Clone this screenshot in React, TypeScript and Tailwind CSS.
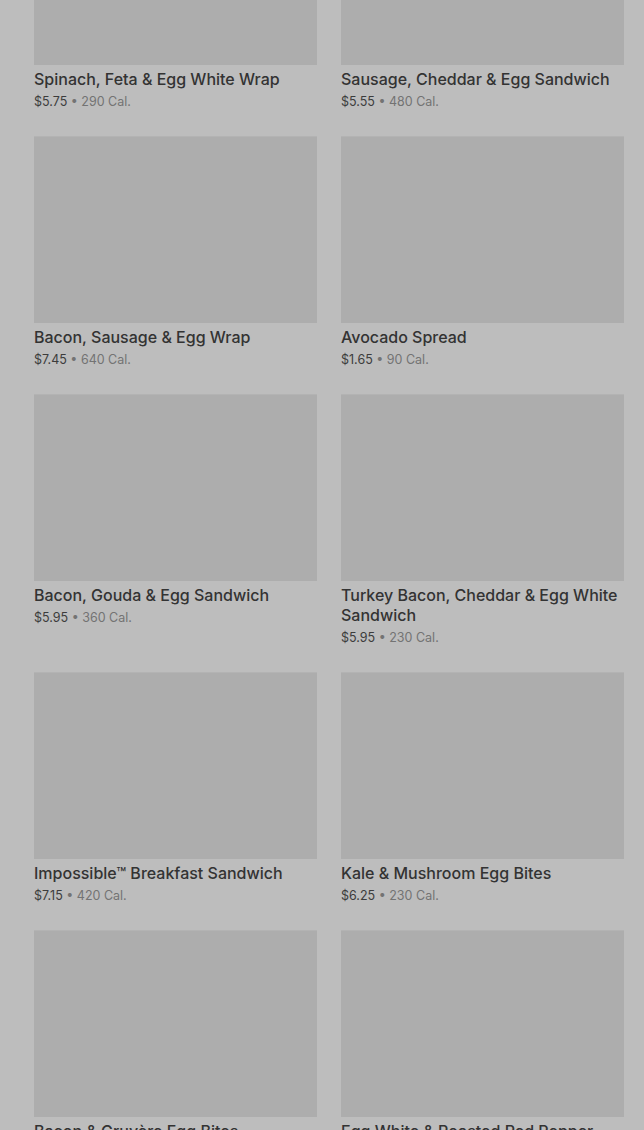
import React from 'react';

interface Item {
  name: string;
  price: string;
  cal: string;
}

const items: Item[] = [
  { name: 'Spinach, Feta & Egg White Wrap', price: '$5.75', cal: '290 Cal.' },
  { name: 'Sausage, Cheddar & Egg Sandwich', price: '$5.55', cal: '480 Cal.' },
  { name: 'Bacon, Sausage & Egg Wrap', price: '$7.45', cal: '640 Cal.' },
  { name: 'Avocado Spread', price: '$1.65', cal: '90 Cal.' },
  { name: 'Bacon, Gouda & Egg Sandwich', price: '$5.95', cal: '360 Cal.' },
  { name: 'Turkey Bacon, Cheddar & Egg White Sandwich', price: '$5.95', cal: '230 Cal.' },
  { name: 'Impossible™ Breakfast Sandwich', price: '$7.15', cal: '420 Cal.' },
  { name: 'Kale & Mushroom Egg Bites', price: '$6.25', cal: '230 Cal.' },
  { name: 'Bacon & Gruyère Egg Bites', price: '$5.45', cal: '300 Cal.' },
  { name: 'Egg White & Roasted Red Pepper Egg Bites', price: '$5.25', cal: '170 Cal.' },
];

const MenuCard: React.FC<{ item: Item }> = ({ item }) => (
  <div className="flex flex-col">
    <div className="h-[187px] w-full bg-[#adadad] border-t border-[#b3b3b3]"></div>
    <h3 className="mt-1 text-[16px] leading-5 font-medium text-[#333333]">
      {item.name}
    </h3>
    <p className="mt-[3px] text-[12.5px] leading-5 text-[#3c3c3c]">
      {item.price} <span className="text-[#737373]">• {item.cal}</span>
    </p>
  </div>
);

export default function App() {
  return (
    <div
      className="h-[1130px] w-full overflow-hidden bg-[#bdbdbd]"
      style={{ fontFamily: 'Inter, "Noto Sans", sans-serif' }}
    >
      <div className="-mt-[122px] grid grid-cols-2 gap-x-6 gap-y-6 pl-[34px] pr-5">
        {items.map((item, i) => (
          <MenuCard key={i} item={item} />
        ))}
      </div>
    </div>
  );
}
